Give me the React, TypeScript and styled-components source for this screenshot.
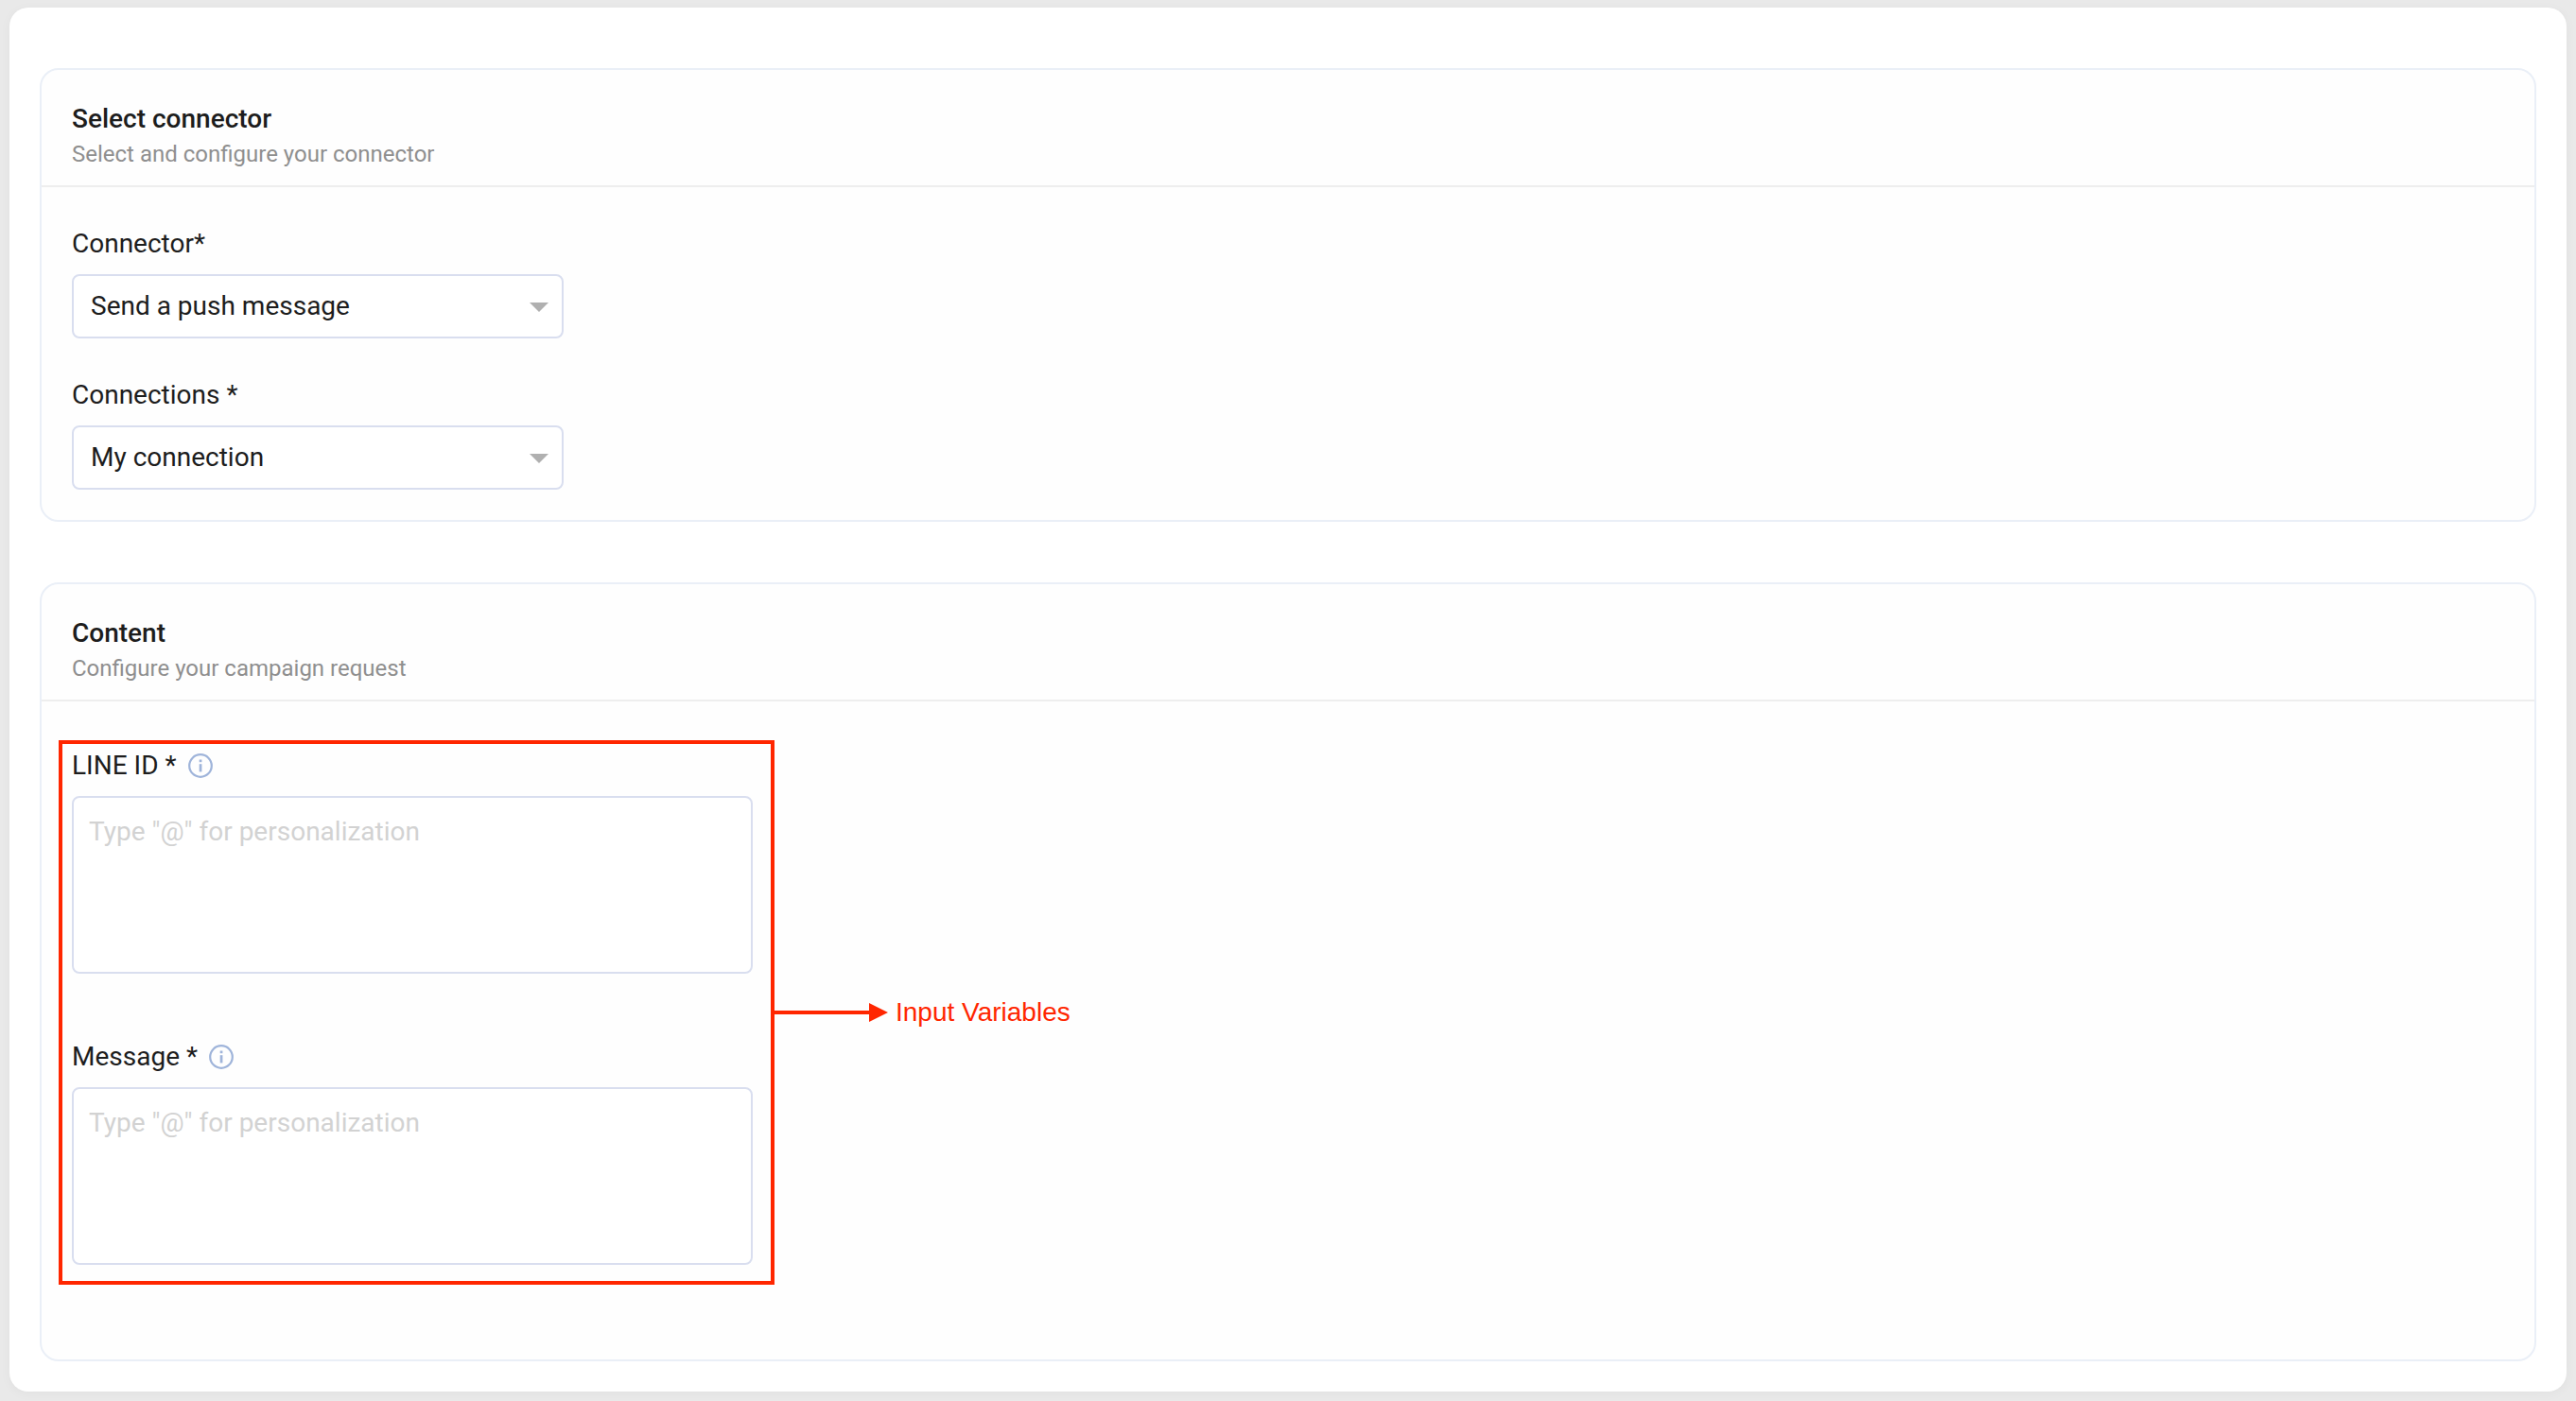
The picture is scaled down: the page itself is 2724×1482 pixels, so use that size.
import React, { useId } from "react";
import styled, { createGlobalStyle } from "styled-components";

const GlobalStyle = createGlobalStyle`
  *, *::before, *::after { box-sizing: border-box; }
  body {
    margin: 0;
    background: #e9e9e9;
    color: #1d1d1d;
    font-family: Roboto, "Liberation Sans", sans-serif;
    font-size: 28px;
    line-height: 40px;
  }
`;

const Page = styled.div`
  padding: 8px 10px 10px;
`;

const Panel = styled.main`
  display: flex;
  flex-direction: column;
  gap: 64px;
  padding: 64px 32px 32px;
  border-radius: 20px;
  background: #ffffff;
  box-shadow: 0 2px 12px rgba(0, 0, 0, 0.04);
`;

const Card = styled.section`
  border: 2px solid #eaeff7;
  border-radius: 20px;
  background: #fefefe;
`;

const CardHeader = styled.header`
  display: flex;
  flex-direction: column;
  gap: 2px;
  padding: 32px 32px 18px;
  border-bottom: 2px solid #eeeeee;
`;

const CardTitle = styled.h2`
  margin: 0;
  font-size: 28px;
  font-weight: 500;
  line-height: 40px;
`;

const CardSubtitle = styled.p`
  margin: 0;
  color: #8f8f8f;
  font-size: 24px;
  line-height: 30px;
`;

const ConnectorForm = styled.div`
  display: flex;
  flex-direction: column;
  align-items: flex-start;
  gap: 40px;
  padding: 40px 32px 32px;
`;

const ContentForm = styled.div`
  padding: 48px 32px 100px;
`;

const VariableGroup = styled.div`
  position: relative;
  display: flex;
  flex-direction: column;
  gap: 68px;
  width: 720px;
`;

const Field = styled.div<{ $width: string }>`
  display: flex;
  flex-direction: column;
  gap: 12px;
  width: ${(p) => p.$width};
  max-width: 100%;
`;

const LabelRow = styled.div`
  display: flex;
  align-items: center;
  gap: 12px;
`;

const InfoButton = styled.button`
  display: flex;
  padding: 0;
  border: 0;
  background: none;
  color: #9fb4da;
  cursor: pointer;
`;

const SelectBox = styled.div`
  position: relative;
  display: flex;
`;

const Select = styled.select`
  appearance: none;
  width: 100%;
  height: 68px;
  padding: 0 52px 0 18px;
  border: 2px solid #d9deef;
  border-radius: 8px;
  background: #ffffff;
  color: inherit;
  font: inherit;
`;

const Caret = styled.svg`
  position: absolute;
  top: 30px;
  right: 16px;
  pointer-events: none;
`;

const TextArea = styled.textarea`
  display: block;
  width: 100%;
  height: 188px;
  padding: 16px;
  border: 2px solid #d9deef;
  border-radius: 8px;
  background: #ffffff;
  color: inherit;
  font: inherit;
  resize: none;

  &::placeholder {
    color: #d2d2d2;
    opacity: 1;
  }
`;

const Highlight = styled.div`
  position: absolute;
  inset: -7px -23px -21px -14px;
  border: 4px solid #ff2600;
  pointer-events: none;
`;

const Callout = styled.div`
  position: absolute;
  top: 0;
  bottom: 0;
  left: 100%;
  display: flex;
  align-items: center;
  gap: 8px;
  margin-left: 4px;
  color: #ff2600;
  font-family: "Liberation Sans", Arial, sans-serif;
  white-space: nowrap;
`;

function InfoIcon() {
  return (
    <svg width="26" height="26" viewBox="0 0 26 26" fill="none" aria-hidden="true">
      <circle cx="13" cy="13" r="11.8" stroke="currentColor" strokeWidth="2.2" />
      <rect x="11.7" y="6.5" width="2.7" height="2.7" fill="currentColor" />
      <rect x="11.7" y="11.2" width="2.7" height="8.2" fill="currentColor" />
    </svg>
  );
}

function SelectField({ label, options }: { label: string; options: string[] }) {
  const id = useId();
  return (
    <Field $width="520px">
      <label htmlFor={id}>{label}</label>
      <SelectBox>
        <Select id={id}>
          {options.map((option) => (
            <option key={option}>{option}</option>
          ))}
        </Select>
        <Caret width="20" height="10" viewBox="0 0 20 10" aria-hidden="true">
          <path d="M0 0h20L10 10z" fill="#b0b0b0" />
        </Caret>
      </SelectBox>
    </Field>
  );
}

function VariableField({ label }: { label: string }) {
  const id = useId();
  return (
    <Field $width="100%">
      <LabelRow>
        <label htmlFor={id}>{label}</label>
        <InfoButton type="button" aria-label="More information">
          <InfoIcon />
        </InfoButton>
      </LabelRow>
      <TextArea id={id} placeholder={'Type "@" for personalization'} />
    </Field>
  );
}

export default function App() {
  return (
    <Page>
      <GlobalStyle />
      <Panel>
        <Card>
          <CardHeader>
            <CardTitle>Select connector</CardTitle>
            <CardSubtitle>Select and configure your connector</CardSubtitle>
          </CardHeader>
          <ConnectorForm>
            <SelectField label="Connector*" options={["Send a push message"]} />
            <SelectField label="Connections *" options={["My connection"]} />
          </ConnectorForm>
        </Card>
        <Card>
          <CardHeader>
            <CardTitle>Content</CardTitle>
            <CardSubtitle>Configure your campaign request</CardSubtitle>
          </CardHeader>
          <ContentForm>
            <VariableGroup>
              <VariableField label="LINE ID *" />
              <VariableField label="Message *" />
              <Highlight>
                <Callout>
                  <svg width="120" height="20" viewBox="0 0 120 20" aria-hidden="true">
                    <path d="M0 8h100V0l20 10-20 10v-8H0z" fill="currentColor" />
                  </svg>
                  <span>Input Variables</span>
                </Callout>
              </Highlight>
            </VariableGroup>
          </ContentForm>
        </Card>
      </Panel>
    </Page>
  );
}
